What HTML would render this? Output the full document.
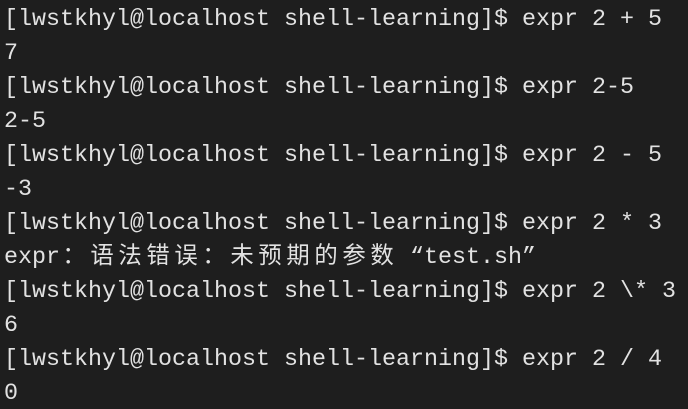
<!DOCTYPE html>
<html><head><meta charset="utf-8"><style>
html,body{margin:0;background:#1e1e1e;width:688px;height:409px;overflow:hidden}
pre{margin:0;padding:3px 0 0 4px;font-family:"Liberation Mono","Noto Sans CJK SC",monospace;font-size:23.33px;line-height:34px;color:#e2e2e2}
.c{display:inline-block;width:28px;text-align:center}
.q{font-family:"Liberation Mono",monospace}
</style></head><body><pre>[lwstkhyl@localhost shell-learning]$ expr 2 + 5
7
[lwstkhyl@localhost shell-learning]$ expr 2-5
2-5
[lwstkhyl@localhost shell-learning]$ expr 2 - 5
-3
[lwstkhyl@localhost shell-learning]$ expr 2 * 3
expr<span class="c">：</span><span class="c">语</span><span class="c">法</span><span class="c">错</span><span class="c">误</span><span class="c">：</span><span class="c">未</span><span class="c">预</span><span class="c">期</span><span class="c">的</span><span class="c">参</span><span class="c">数</span> <span class="q">“test.sh”</span>
[lwstkhyl@localhost shell-learning]$ expr 2 \* 3
6
[lwstkhyl@localhost shell-learning]$ expr 2 / 4
0</pre></body></html>
